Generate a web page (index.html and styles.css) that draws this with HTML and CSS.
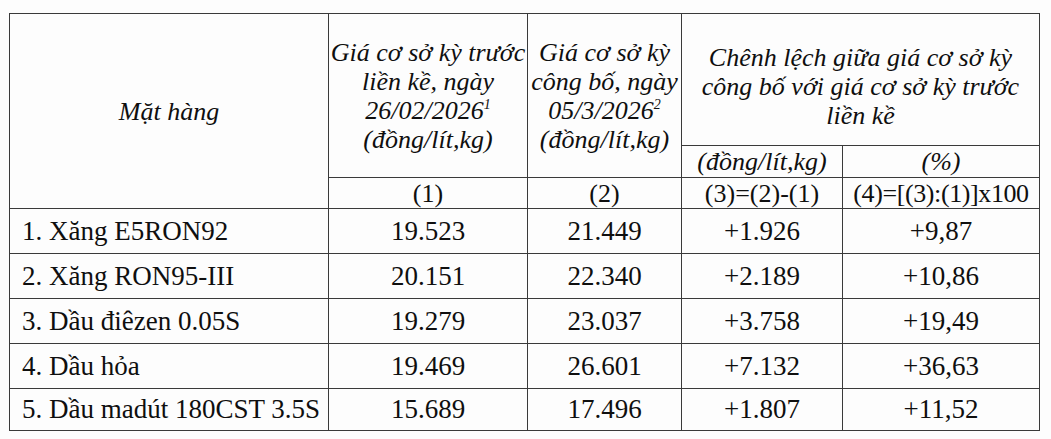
FILE: index.html
```html
<!DOCTYPE html>
<html lang="vi">
<head>
<meta charset="utf-8">
<title>Bảng giá cơ sở</title>
<link rel="stylesheet" href="styles.css">
</head>
<body>
<table class="price-table">
  <colgroup>
    <col class="c1"><col class="c2"><col class="c3"><col class="c4"><col class="c5">
  </colgroup>
  <tr class="h1">
    <th rowspan="3" class="head it">Mặt hàng</th>
    <th rowspan="2" class="head it">Giá cơ sở kỳ trước liền kề, ngày 26/02/2026<span class="note">1</span> (đồng/lít,kg)</th>
    <th rowspan="2" class="head it">Giá cơ sở kỳ công bố, ngày 05/3/2026<span class="note">2</span> (đồng/lít,kg)</th>
    <th colspan="2" class="head it diff">Chênh lệch giữa giá cơ sở kỳ công bố với giá cơ sở kỳ trước liền kề</th>
  </tr>
  <tr class="h2">
    <th class="head it">(đồng/lít,kg)</th>
    <th class="head it">(%)</th>
  </tr>
  <tr class="h3">
    <td>(1)</td>
    <td>(2)</td>
    <td>(3)=(2)-(1)</td>
    <td class="tight">(4)=[(3):(1)]x100</td>
  </tr>
  <tr class="r r1"><td class="name">1. Xăng E5RON92</td><td>19.523</td><td>21.449</td><td>+1.926</td><td>+9,87</td></tr>
  <tr class="r r2"><td class="name">2. Xăng RON95-III</td><td>20.151</td><td>22.340</td><td>+2.189</td><td>+10,86</td></tr>
  <tr class="r r3"><td class="name">3. Dầu điêzen 0.05S</td><td>19.279</td><td>23.037</td><td>+3.758</td><td>+19,49</td></tr>
  <tr class="r r4"><td class="name">4. Dầu hỏa</td><td>19.469</td><td>26.601</td><td>+7.132</td><td>+36,63</td></tr>
  <tr class="r r5"><td class="name">5. Dầu madút 180CST 3.5S</td><td>15.689</td><td>17.496</td><td>+1.807</td><td>+11,52</td></tr>
</table>
</body>
</html>
```
FILE: styles.css
```css
html, body {
  margin: 0;
  padding: 0;
  background: #fdfdfd;
}
body {
  padding: 13px 0 0 9px;
  font-family: "Liberation Serif", "Times New Roman", serif;
  color: #0f0f0f;
}
.price-table {
  border-collapse: collapse;
  table-layout: fixed;
  width: 1030px;
  font-size: 27px;
}
.c1 { width: 319px; }
.c2 { width: 199px; }
.c3 { width: 154px; }
.c4 { width: 161px; }
.c5 { width: 197px; }
.price-table th,
.price-table td {
  border: 1.5px solid #3a3a3a;
  padding: 0;
  text-align: center;
  vertical-align: middle;
  font-weight: normal;
  white-space: nowrap;
}
.price-table th.head {
  white-space: normal;
  line-height: 29px;
  font-size: 26px;
}
.it { font-style: italic; }
.h1 { height: 132px; }
.h2 { height: 32px; }
.h3 { height: 31px; }
.h1 .diff { padding: 14px 8px 0; }
.h3 td { line-height: 28px; padding-top: 1px; font-size: 26px; }
.tight { letter-spacing: -0.4px; }
.note {
  display: inline-block;
  font-size: 14px;
  line-height: 14px;
  vertical-align: top;
  margin-top: 2px;
}
.r { height: 45px; }
.r5 { height: 42px; }
.price-table td.name {
  text-align: left;
  padding-left: 12px;
}
```
